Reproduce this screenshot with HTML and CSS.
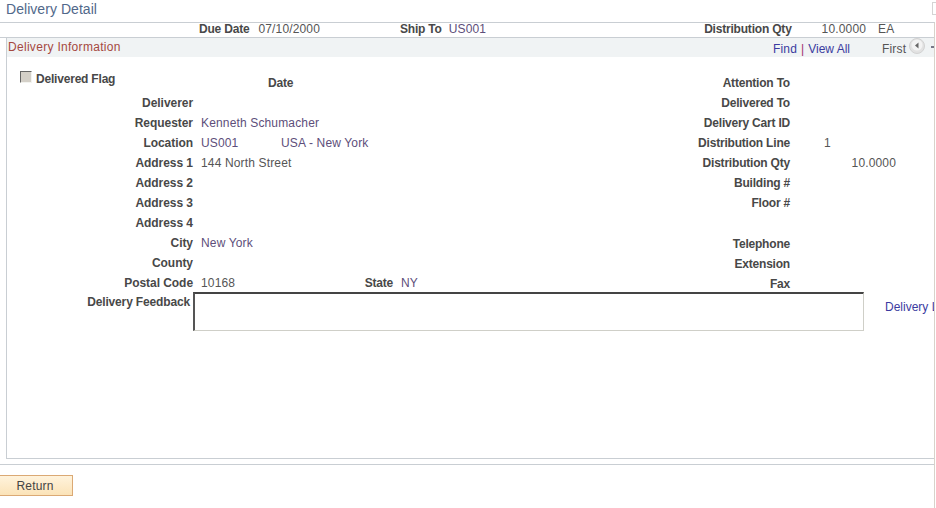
FILE: index.html
```html
<!DOCTYPE html>
<html lang="en">
<head>
  <meta charset="UTF-8">
  <title>Delivery Detail</title>
  <link rel="stylesheet" href="styles.css">
</head>
<body>

  <div class="page">
    <div class="page-title">
      <h1>Delivery Detail</h1>
      <span class="help-box"></span>
    </div>

    <div class="content">
      <div class="summary">
        <span class="label due-label">Due Date</span>
        <span class="value due-value">07/10/2000</span>
        <span class="label ship-label">Ship To</span>
        <span class="value ship-value">US001</span>
        <span class="label qty-label">Distribution Qty</span>
        <span class="value qty-value">10.0000</span>
        <span class="value uom-value">EA</span>
      </div>

      <div class="section">
        <div class="section-head">
          <span class="section-title">Delivery Information</span>
          <span class="section-nav">
            <a class="link">Find</a>
            <span class="sep">|</span>
            <a class="link view-all">View All</a>
            <span class="first">First</span>
            <svg class="prev" width="18" height="18" viewBox="0 0 18 18">
              <circle cx="9" cy="9" r="7.5" fill="#e2e2e2" stroke="#d2d2d2"/>
              <circle cx="9" cy="8" r="5.5" fill="#f3f3f3"/>
              <path d="M10.5 5.5v6l-3.5-3z" fill="#666"/>
            </svg>
            <span class="next-tick"></span>
          </span>
        </div>

        <div class="form">
          <div class="col-left">
            <div class="row row-flag">
              <span class="flag">
                <span class="checkbox"></span>
                <span class="label flag-label">Delivered Flag</span>
              </span>
              <span class="label">Date</span>
            </div>
            <div class="row"><span class="label field">Deliverer</span></div>
            <div class="row"><span class="label field">Requester</span><span class="value purple">Kenneth Schumacher</span></div>
            <div class="row"><span class="label field">Location</span><span class="value purple loc-code">US001</span><span class="value purple">USA - New York</span></div>
            <div class="row"><span class="label field">Address 1</span><span class="value">144 North Street</span></div>
            <div class="row"><span class="label field">Address 2</span></div>
            <div class="row"><span class="label field">Address 3</span></div>
            <div class="row"><span class="label field">Address 4</span></div>
            <div class="row"><span class="label field">City</span><span class="value purple">New York</span></div>
            <div class="row"><span class="label field">County</span></div>
            <div class="row"><span class="label field">Postal Code</span><span class="value postal">10168</span><span class="label state-label">State</span><span class="value purple">NY</span></div>
          </div>

          <div class="col-right">
            <div class="row"><span class="label field-right">Attention To</span></div>
            <div class="row"><span class="label field-right">Delivered To</span></div>
            <div class="row"><span class="label field-right">Delivery Cart ID</span></div>
            <div class="row"><span class="label field-right">Distribution Line</span><span class="value line-no">1</span></div>
            <div class="row"><span class="label field-right">Distribution Qty</span><span class="value line-qty">10.0000</span></div>
            <div class="row"><span class="label field-right">Building #</span></div>
            <div class="row"><span class="label field-right">Floor #</span></div>
            <div class="row row-spacer"></div>
            <div class="row"><span class="label field-right">Telephone</span></div>
            <div class="row"><span class="label field-right">Extension</span></div>
            <div class="row"><span class="label field-right">Fax</span></div>
          </div>
        </div>

        <div class="feedback">
          <span class="label feedback-label">Delivery Feedback</span>
          <div class="feedback-box"></div>
          <a class="link feedback-link">Delivery Location</a>
        </div>
      </div>

      <div class="footer">
        <button class="btn">Return</button>
      </div>
    </div>
  </div>

</body>
</html>
```

FILE: styles.css
```css
html, body {
  margin: 0;
  padding: 0;
  background: #fff;
  overflow: hidden;
}
body {
  font-family: "Liberation Sans", Arial, sans-serif;
  font-size: 12px;
  color: #444;
}
.page {
  width: 936px;
  height: 508px;
  overflow: hidden;
}
.page-title {
  display: flex;
  justify-content: space-between;
  height: 22px;
}
h1 {
  margin: 0;
  padding: 1px 0 0 6px;
  font-size: 14px;
  font-weight: normal;
  line-height: 17px;
  letter-spacing: 0.05px;
  color: #51688a;
}
.help-box {
  width: 3px;
  height: 11px;
  margin-top: 2px;
  border: 1px solid #d4d4d4;
  border-right: 0;
}
.content {
  width: 934px;
  height: 486px;
  overflow: hidden;
  border-top: 1px solid #c9ced3;
  border-right: 1px solid #d8d2ca;
}
.summary {
  display: flex;
  height: 14px;
  line-height: 13px;
  border-bottom: 1px solid #c9ced3;
}
.label {
  font-weight: bold;
  letter-spacing: -0.2px;
  color: #484848;
}
.value {
  letter-spacing: 0.15px;
  color: #555;
}
.purple {
  color: #5d4e7a;
}
.due-label { margin-left: 199px; }
.due-value { margin-left: 9px; }
.ship-label { margin-left: 80px; }
.ship-value { margin-left: 7px; color: #5d4e7a; }
.qty-label { margin-left: 218px; }
.qty-value { margin-left: 30px; }
.uom-value { margin-left: 12px; }

.section {
  width: 1000px;
  height: 420px;
  margin-left: 6px;
  border-left: 1px solid #c9ced3;
  border-bottom: 1px solid #c9ced3;
}
.section-head {
  display: flex;
  height: 19px;
  line-height: 19px;
  background: #f0f3f4;
}
.section-title {
  width: 765px;
  padding-left: 1px;
  letter-spacing: 0.3px;
  color: #a5483f;
}
.section-nav {
  display: flex;
  align-items: center;
  padding-top: 4px;
}
.link {
  letter-spacing: 0.18px;
  color: #3b3ba0;
}
.view-all {
  letter-spacing: 0;
}
.sep {
  margin: 0 4px;
  color: #a03070;
}
.first {
  margin-left: 32px;
  letter-spacing: 0.18px;
  color: #555;
}
.prev {
  align-self: flex-start;
  margin: -5px 0 0 2px;
}
.next-tick {
  width: 3px;
  height: 2px;
  margin: -5px 0 0 5px;
  background: #778;
}
.form {
  display: flex;
  padding: 16px 0 0 1px;
}
.col-left {
  width: 420px;
}
.row {
  display: flex;
  height: 20px;
  line-height: 20px;
}
.field {
  width: 185px;
  margin-right: 8px;
  letter-spacing: -0.05px;
  text-align: right;
}
.row-flag {
  align-items: flex-start;
}
.flag {
  display: flex;
  align-items: center;
  width: 248px;
  height: 10px;
  margin-left: 12px;
}
.flag-label {
  margin-top: 1px;
}
.checkbox {
  width: 10px;
  height: 10px;
  margin: -2px 4px 0 0;
  background: #d4d0c8;
  border: 1px solid #f4f4f0;
  border-top-color: #666;
  border-left-color: #666;
}
.loc-code { width: 80px; }
.postal { width: 162px; }
.state-label {
  width: 30px;
  margin-right: 8px;
  text-align: right;
}
.col-right {
  width: 500px;
}
.field-right {
  width: 362px;
  text-align: right;
}
.row-spacer { height: 21px; }
.line-no { margin-left: 34px; }
.line-qty { width: 106px; text-align: right; }

.feedback {
  display: flex;
  margin: -2px 0 0 1px;
}
.feedback-label {
  width: 182px;
  margin-right: 3px;
  line-height: 20px;
  letter-spacing: -0.15px;
  text-align: right;
}
.feedback-box {
  width: 668px;
  height: 36px;
  background: #fff;
  border: 1px solid #cfcfc8;
  border-top: 2px solid #444;
  border-left: 2px solid #555;
}
.feedback-link {
  margin: 8px 0 0 21px;
  line-height: 14px;
  letter-spacing: 0;
  white-space: nowrap;
}
.footer {
  margin-top: 5px;
  padding-top: 10px;
  border-top: 1px solid #c9ced3;
}
.btn {
  display: block;
  width: 74px;
  height: 21px;
  margin-left: -1px;
  padding: 0 2px 0 0;
  font: 12px "Liberation Sans", Arial, sans-serif;
  letter-spacing: 0.2px;
  color: #444;
  background: linear-gradient(#fff3dc, #fbe3b8);
  border: 1px solid #dba974;
}
```
